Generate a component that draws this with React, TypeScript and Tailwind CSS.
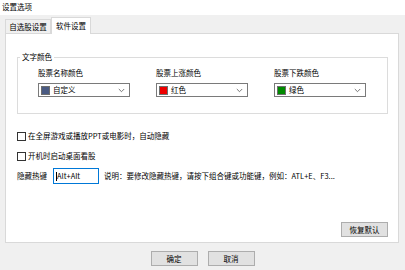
import React from 'react';

const font = { fontFamily: '"Noto Sans CJK SC", "Noto Sans", sans-serif' };

interface ColorPick {
  label: string;
  value: string;
  swatch: string;
}

const picks: ColorPick[] = [
  { label: '股票名称颜色', value: '自定义', swatch: 'bg-[#4a5a82]' },
  { label: '股票上涨颜色', value: '红色', swatch: 'bg-[#ee0000]' },
  { label: '股票下跌颜色', value: '绿色', swatch: 'bg-[#008a00]' },
];

function Chevron() {
  return (
    <svg width="7" height="5" viewBox="0 0 7 5" className="shrink-0">
      <path d="M0.8 1 L3.5 3.7 L6.2 1" fill="none" stroke="#555" strokeWidth="0.8" />
    </svg>
  );
}

function ColorSelect({ pick }: { pick: ColorPick }) {
  return (
    <div className="flex flex-col w-[92px]">
      <div className="h-[12px] leading-[12px]">{pick.label}</div>
      <div className="mt-[4px] h-[14px] border border-[#7a7a7a] bg-white flex items-center pl-[2px] pr-[4px]">
        <span className={`w-[9px] h-[9px] border border-[#6e6e6e] ${pick.swatch}`} />
        <span className="ml-[3px] flex-1 leading-[12px]">{pick.value}</span>
        <Chevron />
      </div>
    </div>
  );
}

function Check({ text }: { text: string }) {
  return (
    <div className="flex items-center h-[10px]">
      <span className="w-[9px] h-[9px] border border-[#333] bg-white" />
      <span className="ml-[2px] leading-[10px]">{text}</span>
    </div>
  );
}

export default function App() {
  return (
    <div
      className="w-[405px] h-[270px] bg-[#f0f0f0] text-[7.5px] text-black flex flex-col overflow-hidden"
      style={font}
    >
      {/* title */}
      <div className="h-[15px] bg-white pl-[2px] leading-[14px]">设置选项</div>

      {/* tabs */}
      <div className="px-[5px] pt-[2px] flex items-end h-[18px]">
        <div className="w-[46px] h-[14px] border border-b-0 border-[#d9d9d9] bg-[#f0f0f0] flex items-center justify-center">
          自选股设置
        </div>
        <div className="w-[40px] h-[17px] -mb-px relative z-10 border border-b-0 border-[#d9d9d9] bg-white flex items-center justify-center">
          软件设置
        </div>
      </div>

      {/* panel */}
      <div className="mx-[5px] w-[394px] h-[210px] border border-[#d9d9d9] bg-white flex flex-col">
        <fieldset className="ml-[11px] mt-[18px] w-[371px] h-[62px] border border-[#dcdcdc] px-[20px]">
          <legend className="px-[2px] -ml-[18px] leading-[10px]">文字颜色</legend>
          <div className="flex gap-[26px] mt-[5px]">
            {picks.map((p) => (
              <ColorSelect key={p.label} pick={p} />
            ))}
          </div>
        </fieldset>

        <div className="ml-[11px] mt-[17px] flex flex-col gap-[10px]">
          <Check text="在全屏游戏或播放PPT或电影时，自动隐藏" />
          <Check text="开机时启动桌面看股" />
        </div>

        <div className="ml-[11px] mt-[7px] flex items-center h-[16px]">
          <span>隐藏热键</span>
          <div className="ml-[6px] w-[46px] h-[16px] border border-[#0078d7] bg-white flex items-center pl-[2px]">
            <span className="w-px h-[9px] bg-black" />
            <span>Alt+Alt</span>
          </div>
          <span className="ml-[5px]">说明：要修改隐藏热键，请按下组合键或功能键，例如：ATL+E、F3...</span>
        </div>

        <div className="flex justify-end mt-[38px] pr-[10px]">
          <button className="w-[47px] h-[15px] border border-[#adadad] bg-[#e1e1e1] leading-[13px]">
            恢复默认
          </button>
        </div>
      </div>

      {/* footer */}
      <div className="flex justify-center gap-[10px] mt-[8px]">
        <button className="w-[47px] h-[15px] border border-[#adadad] bg-[#e1e1e1] leading-[13px]">确定</button>
        <button className="w-[47px] h-[15px] border border-[#adadad] bg-[#e1e1e1] leading-[13px]">取消</button>
      </div>
    </div>
  );
}
